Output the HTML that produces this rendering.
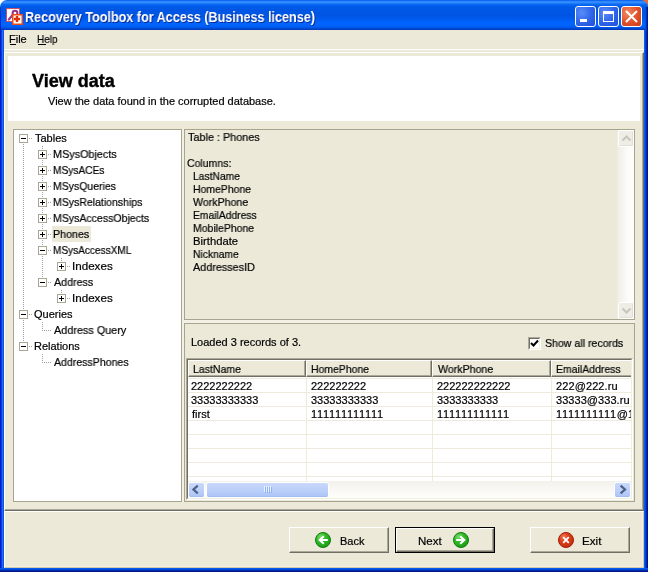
<!DOCTYPE html>
<html><head><meta charset="utf-8">
<style>
*{box-sizing:border-box}
html,body{margin:0;padding:0}
body{width:648px;height:572px;overflow:hidden;position:relative;background:#fff;font-family:"Liberation Sans",sans-serif;font-size:11px;color:#000}
.a{position:absolute}
.t{will-change:transform;-webkit-text-stroke:0.2px #000;position:absolute;white-space:pre;line-height:13px;font-size:11px;padding-top:1px}
.btn{border-top:1px solid #fff;border-left:1px solid #fff;border-right:1px solid #716F64;border-bottom:1px solid #716F64;box-shadow:inset -1px -1px 0 #ACA899;background:#ECE9D8}
.tb{width:9px;height:9px;border:1px solid #A8A593;background:#fff}
.hd{background:#ECE9D8;border-top:1px solid #fff;border-left:1px solid #fff;border-right:1px solid #716F64;border-bottom:1px solid #716F64;box-shadow:inset -1px -1px 0 #ACA899}
.sbb{width:17px;height:17px;border:1px solid #fff;border-radius:2px;background:linear-gradient(to bottom,#C8D6FB,#B6CCF8 60%,#A9C2F6);box-shadow:inset -1px -1px 0 #9EB8EA}
.sbd{width:17px;height:17px;border:1px solid #fff;border-radius:2px;background:#EEEDE6;box-shadow:inset -1px -1px 0 #E2E0D4}
</style></head><body>
<!-- corner backgrounds -->
<div class="a" style="left:0;top:0;width:10px;height:10px;background:#fff"></div>
<div class="a" style="left:638px;top:0;width:10px;height:10px;background:#f06a30"></div>

<!-- title bar -->
<div class="a" id="title" style="left:0;top:0;width:648px;height:30px;border-radius:7px 7px 0 0;
background:linear-gradient(to bottom,#0058EE 0px,#3C95FF 2px,#2A86FA 3px,#0E6EF5 4px,#005DEA 6px,#0056E4 10px,#0055E6 16px,#005DF3 20px,#0064FF 23px,#0062FC 26px,#0053E0 28px,#003FC2 29px,#003AB8 30px)"></div>
<div class="a" style="left:0;top:30px;width:4px;height:542px;background:linear-gradient(to right,#0019CF 0,#0019CF 1px,#0B3FE0 1px,#0B3FE0 2px,#1C6DF2 2px,#1C6DF2 3px,#0A54DE 3px)"></div>
<div class="a" style="left:644px;top:30px;width:4px;height:542px;background:linear-gradient(to right,#0A5CF6 0,#0A5CF6 1px,#0044D8 1px,#0044D8 2px,#002AAE 2px,#002AAE 3px,#00168A 3px)"></div>
<div class="a" style="left:0;top:7px;width:1px;height:23px;background:linear-gradient(to bottom,#0A3CD0,#0019CF)"></div>
<div class="a" style="left:645px;top:7px;width:3px;height:23px;background:linear-gradient(to right,#0050E0 0,#0050E0 1px,#0033B8 1px,#0033B8 2px,#00189A 2px)"></div>
<div class="a" style="left:0;top:568px;width:648px;height:4px;background:linear-gradient(to bottom,#0A5CF0 0,#0A5CF0 1px,#0046D4 1px,#0046D4 2px,#002CA8 2px,#002CA8 3px,#001488 3px)"></div>

<!-- title icon -->
<svg class="a" style="left:6px;top:8px" width="17" height="17" viewBox="0 0 17 17">
  <rect x="0.5" y="0.5" width="13" height="13" fill="#fff" stroke="#C8506A" stroke-width="1"/>
  <path d="M2.8 11.5 L6.8 6.8" stroke="#9C3C84" stroke-width="2.2" stroke-linecap="round"/>
  <circle cx="9" cy="5.2" r="2.4" fill="none" stroke="#9A2C80" stroke-width="2"/>
  <rect x="6.75" y="6.75" width="9.5" height="9.5" fill="#fff" stroke="#F04A10" stroke-width="1.5"/>
  <path d="M11 8 V14 M8 11 H14" stroke="#E0300A" stroke-width="2.4"/>
</svg>
<div class="a" style="left:25px;top:7px;font-weight:bold;font-size:14px;line-height:20px;white-space:pre;color:#fff;text-shadow:1px 1px 0 #0A2A90;transform:scaleX(0.9);transform-origin:0 0;will-change:transform">Recovery Toolbox for Access (Business license)</div>

<!-- caption buttons -->
<div class="a" style="left:575px;top:6px;width:21px;height:21px;border:1px solid #fff;border-radius:3px;background:radial-gradient(circle at 30% 30%,#5A8CF8 0,#2E64E8 55%,#1E50D8 100%)"></div>
<div class="a" style="left:580px;top:19px;width:7px;height:3px;background:#fff"></div>
<div class="a" style="left:598px;top:6px;width:21px;height:21px;border:1px solid #fff;border-radius:3px;background:radial-gradient(circle at 30% 30%,#5A8CF8 0,#2E64E8 55%,#1E50D8 100%)"></div>
<div class="a" style="left:603px;top:11px;width:11px;height:11px;border:1px solid #fff;border-top-width:3px"></div>
<div class="a" style="left:621px;top:6px;width:21px;height:21px;border:1px solid #fff;border-radius:3px;background:radial-gradient(circle at 30% 30%,#F08860 0,#E0502A 55%,#C83A16 100%)"></div>
<svg class="a" style="left:621px;top:6px" width="21" height="21"><path d="M5 5 L16 16 M16 5 L5 16" stroke="#fff" stroke-width="2"/></svg>

<!-- client -->
<div class="a" id="client" style="left:4px;top:30px;width:640px;height:538px;background:#ECE9D8"></div>

<!-- menu -->
<div class="t" style="left:9px;top:32px">File</div>
<div class="a" style="left:10px;top:44px;width:6px;height:1px;background:#000"></div>
<div class="t" style="left:37px;top:32px;transform:scaleX(0.91);transform-origin:0 0">Help</div>
<div class="a" style="left:38px;top:44px;width:8px;height:1px;background:#000"></div>
<div class="a" style="left:4px;top:49px;width:640px;height:1px;background:#fff"></div>

<!-- top raised frame -->
<div class="a" style="left:4px;top:52px;width:640px;height:459px;border-top:1px solid #fff;border-left:1px solid #fff;border-right:1px solid #716F64;border-bottom:1px solid #716F64"></div>
<div class="a" style="left:5px;top:53px;width:638px;height:457px;border-right:1px solid #ACA899;border-bottom:1px solid #ACA899"></div>
<!-- bottom raised frame -->
<div class="a" style="left:4px;top:511px;width:640px;height:57px;border-top:1px solid #fff;border-left:1px solid #fff;border-right:1px solid #D2C9A8;border-bottom:1px solid #D2C9A8"></div>
<div class="a" style="left:5px;top:512px;width:638px;height:55px;border-right:1px solid #F2F0E6;border-bottom:1px solid #F2F0E6"></div>

<!-- header -->
<div class="a" style="left:8px;top:56px;width:632px;height:65px;background:#fff"></div>
<div class="a" style="left:32px;top:70px;font-weight:bold;font-size:18px;line-height:20px;white-space:pre;padding-top:1px;will-change:transform;-webkit-text-stroke:0.4px #000">View data</div>
<div class="t" style="left:48px;top:94px">View the data found in the corrupted database.</div>

<!-- splitter light -->
<div class="a" style="left:182px;top:129px;width:2px;height:373px;background:#F3F1E6"></div>
<div class="a" style="left:184px;top:320px;width:451px;height:3px;background:#F3F1E6"></div>

<!-- tree -->
<div class="a" id="tree" style="left:13px;top:129px;width:169px;height:373px;border:1px solid #A7A490;background:#fff"></div>

<!--TREE-->
<div class="a" style="left:23px;top:138px;width:1px;height:209px;background:repeating-linear-gradient(to bottom,#A0A0A0 0 1px,transparent 1px 2px)"></div>
<div class="a" style="left:29px;top:138px;width:3px;height:1px;background:repeating-linear-gradient(to right,#A0A0A0 0 1px,transparent 1px 2px)"></div>
<div class="a" style="left:42px;top:154px;width:1px;height:129px;background:repeating-linear-gradient(to bottom,#A0A0A0 0 1px,transparent 1px 2px)"></div>
<div class="a" style="left:42px;top:146px;width:1px;height:9px;background:repeating-linear-gradient(to bottom,#A0A0A0 0 1px,transparent 1px 2px)"></div>
<div class="a" style="left:48px;top:154px;width:3px;height:1px;background:repeating-linear-gradient(to right,#A0A0A0 0 1px,transparent 1px 2px)"></div>
<div class="a" style="left:42px;top:170px;width:1px;height:113px;background:repeating-linear-gradient(to bottom,#A0A0A0 0 1px,transparent 1px 2px)"></div>
<div class="a" style="left:48px;top:170px;width:3px;height:1px;background:repeating-linear-gradient(to right,#A0A0A0 0 1px,transparent 1px 2px)"></div>
<div class="a" style="left:42px;top:186px;width:1px;height:97px;background:repeating-linear-gradient(to bottom,#A0A0A0 0 1px,transparent 1px 2px)"></div>
<div class="a" style="left:48px;top:186px;width:3px;height:1px;background:repeating-linear-gradient(to right,#A0A0A0 0 1px,transparent 1px 2px)"></div>
<div class="a" style="left:42px;top:202px;width:1px;height:81px;background:repeating-linear-gradient(to bottom,#A0A0A0 0 1px,transparent 1px 2px)"></div>
<div class="a" style="left:48px;top:202px;width:3px;height:1px;background:repeating-linear-gradient(to right,#A0A0A0 0 1px,transparent 1px 2px)"></div>
<div class="a" style="left:42px;top:218px;width:1px;height:65px;background:repeating-linear-gradient(to bottom,#A0A0A0 0 1px,transparent 1px 2px)"></div>
<div class="a" style="left:48px;top:218px;width:3px;height:1px;background:repeating-linear-gradient(to right,#A0A0A0 0 1px,transparent 1px 2px)"></div>
<div class="a" style="left:42px;top:234px;width:1px;height:49px;background:repeating-linear-gradient(to bottom,#A0A0A0 0 1px,transparent 1px 2px)"></div>
<div class="a" style="left:48px;top:234px;width:3px;height:1px;background:repeating-linear-gradient(to right,#A0A0A0 0 1px,transparent 1px 2px)"></div>
<div class="a" style="left:42px;top:250px;width:1px;height:33px;background:repeating-linear-gradient(to bottom,#A0A0A0 0 1px,transparent 1px 2px)"></div>
<div class="a" style="left:48px;top:250px;width:3px;height:1px;background:repeating-linear-gradient(to right,#A0A0A0 0 1px,transparent 1px 2px)"></div>
<div class="a" style="left:61px;top:258px;width:1px;height:9px;background:repeating-linear-gradient(to bottom,#A0A0A0 0 1px,transparent 1px 2px)"></div>
<div class="a" style="left:67px;top:266px;width:3px;height:1px;background:repeating-linear-gradient(to right,#A0A0A0 0 1px,transparent 1px 2px)"></div>
<div class="a" style="left:48px;top:282px;width:3px;height:1px;background:repeating-linear-gradient(to right,#A0A0A0 0 1px,transparent 1px 2px)"></div>
<div class="a" style="left:61px;top:290px;width:1px;height:9px;background:repeating-linear-gradient(to bottom,#A0A0A0 0 1px,transparent 1px 2px)"></div>
<div class="a" style="left:67px;top:298px;width:3px;height:1px;background:repeating-linear-gradient(to right,#A0A0A0 0 1px,transparent 1px 2px)"></div>
<div class="a" style="left:23px;top:314px;width:1px;height:33px;background:repeating-linear-gradient(to bottom,#A0A0A0 0 1px,transparent 1px 2px)"></div>
<div class="a" style="left:29px;top:314px;width:3px;height:1px;background:repeating-linear-gradient(to right,#A0A0A0 0 1px,transparent 1px 2px)"></div>
<div class="a" style="left:42px;top:322px;width:1px;height:9px;background:repeating-linear-gradient(to bottom,#A0A0A0 0 1px,transparent 1px 2px)"></div>
<div class="a" style="left:44px;top:330px;width:7px;height:1px;background:repeating-linear-gradient(to right,#A0A0A0 0 1px,transparent 1px 2px)"></div>
<div class="a" style="left:29px;top:346px;width:3px;height:1px;background:repeating-linear-gradient(to right,#A0A0A0 0 1px,transparent 1px 2px)"></div>
<div class="a" style="left:42px;top:354px;width:1px;height:9px;background:repeating-linear-gradient(to bottom,#A0A0A0 0 1px,transparent 1px 2px)"></div>
<div class="a" style="left:44px;top:362px;width:7px;height:1px;background:repeating-linear-gradient(to right,#A0A0A0 0 1px,transparent 1px 2px)"></div>
<div class="a tb" style="left:19px;top:134px"></div>
<div class="a" style="left:21px;top:138px;width:5px;height:1px;background:#000"></div>
<div class="t tt" style="left:35px;top:131px">Tables</div>
<div class="a tb" style="left:38px;top:150px"></div>
<div class="a" style="left:40px;top:154px;width:5px;height:1px;background:#000"></div>
<div class="a" style="left:42px;top:152px;width:1px;height:5px;background:#000"></div>
<div class="t tt" style="left:53px;top:147px;transform:scaleX(0.984);transform-origin:0 0">MSysObjects</div>
<div class="a tb" style="left:38px;top:166px"></div>
<div class="a" style="left:40px;top:170px;width:5px;height:1px;background:#000"></div>
<div class="a" style="left:42px;top:168px;width:1px;height:5px;background:#000"></div>
<div class="t tt" style="left:53px;top:163px;transform:scaleX(0.925);transform-origin:0 0">MSysACEs</div>
<div class="a tb" style="left:38px;top:182px"></div>
<div class="a" style="left:40px;top:186px;width:5px;height:1px;background:#000"></div>
<div class="a" style="left:42px;top:184px;width:1px;height:5px;background:#000"></div>
<div class="t tt" style="left:53px;top:179px;transform:scaleX(0.953);transform-origin:0 0">MSysQueries</div>
<div class="a tb" style="left:38px;top:198px"></div>
<div class="a" style="left:40px;top:202px;width:5px;height:1px;background:#000"></div>
<div class="a" style="left:42px;top:200px;width:1px;height:5px;background:#000"></div>
<div class="t tt" style="left:53px;top:195px;transform:scaleX(0.956);transform-origin:0 0">MSysRelationships</div>
<div class="a tb" style="left:38px;top:214px"></div>
<div class="a" style="left:40px;top:218px;width:5px;height:1px;background:#000"></div>
<div class="a" style="left:42px;top:216px;width:1px;height:5px;background:#000"></div>
<div class="t tt" style="left:53px;top:211px;transform:scaleX(0.959);transform-origin:0 0">MSysAccessObjects</div>
<div class="a tb" style="left:38px;top:230px"></div>
<div class="a" style="left:40px;top:234px;width:5px;height:1px;background:#000"></div>
<div class="a" style="left:42px;top:232px;width:1px;height:5px;background:#000"></div>
<div class="a" style="left:52px;top:226px;width:39px;height:16px;background:#ECE9D8"></div>
<div class="t tt" style="left:53px;top:227px;transform:scaleX(0.971);transform-origin:0 0">Phones</div>
<div class="a tb" style="left:38px;top:246px"></div>
<div class="a" style="left:40px;top:250px;width:5px;height:1px;background:#000"></div>
<div class="t tt" style="left:53px;top:243px;transform:scaleX(0.916);transform-origin:0 0">MSysAccessXML</div>
<div class="a tb" style="left:57px;top:262px"></div>
<div class="a" style="left:59px;top:266px;width:5px;height:1px;background:#000"></div>
<div class="a" style="left:61px;top:264px;width:1px;height:5px;background:#000"></div>
<div class="t tt" style="left:72px;top:259px;transform:scaleX(1.056);transform-origin:0 0">Indexes</div>
<div class="a tb" style="left:38px;top:278px"></div>
<div class="a" style="left:40px;top:282px;width:5px;height:1px;background:#000"></div>
<div class="t tt" style="left:54px;top:275px;transform:scaleX(0.974);transform-origin:0 0">Address</div>
<div class="a tb" style="left:57px;top:294px"></div>
<div class="a" style="left:59px;top:298px;width:5px;height:1px;background:#000"></div>
<div class="a" style="left:61px;top:296px;width:1px;height:5px;background:#000"></div>
<div class="t tt" style="left:72px;top:291px;transform:scaleX(1.056);transform-origin:0 0">Indexes</div>
<div class="a tb" style="left:19px;top:310px"></div>
<div class="a" style="left:21px;top:314px;width:5px;height:1px;background:#000"></div>
<div class="t tt" style="left:34px;top:307px">Queries</div>
<div class="t tt" style="left:54px;top:323px;transform:scaleX(0.986);transform-origin:0 0">Address Query</div>
<div class="a tb" style="left:19px;top:342px"></div>
<div class="a" style="left:21px;top:346px;width:5px;height:1px;background:#000"></div>
<div class="t tt" style="left:34px;top:339px">Relations</div>
<div class="t tt" style="left:54px;top:355px;transform:scaleX(0.961);transform-origin:0 0">AddressPhones</div>
<!--/TREE-->
<!-- right top panel -->
<div class="a" style="left:184px;top:129px;width:451px;height:191px;border:1px solid #A7A490;background:#ECE9D8"></div>
<div class="t" style="left:188px;top:130px;transform:scaleX(0.986);transform-origin:0 0">Table : Phones</div>
<div class="t" style="left:187px;top:156px;transform:scaleX(0.955);transform-origin:0 0">Columns:</div>
<div class="t" style="left:193px;top:169px;transform:scaleX(0.938);transform-origin:0 0">LastName</div>
<div class="t" style="left:193px;top:182px;transform:scaleX(0.949);transform-origin:0 0">HomePhone</div>
<div class="t" style="left:193px;top:195px;transform:scaleX(0.964);transform-origin:0 0">WorkPhone</div>
<div class="t" style="left:193px;top:208px;transform:scaleX(0.939);transform-origin:0 0">EmailAddress</div>
<div class="t" style="left:193px;top:221px;transform:scaleX(0.952);transform-origin:0 0">MobilePhone</div>
<div class="t" style="left:193px;top:234px;transform:scaleX(1.024);transform-origin:0 0">Birthdate</div>
<div class="t" style="left:193px;top:247px;transform:scaleX(0.936);transform-origin:0 0">Nickname</div>
<div class="t" style="left:193px;top:260px;transform:scaleX(0.984);transform-origin:0 0">AddressesID</div>

<!-- right bottom panel -->
<div class="a" style="left:184px;top:323px;width:451px;height:179px;border:1px solid #A7A490;background:#ECE9D8"></div>
<div class="t" style="left:191px;top:335px">Loaded 3 records of 3.</div>
<div class="t" style="left:545px;top:336px;transform:scaleX(0.962);transform-origin:0 0">Show all records</div>

<!--GRID-->
<div class="a" style="left:186px;top:358px;width:447px;height:142px;border-top:1px solid #ACA899;border-left:1px solid #ACA899;border-right:1px solid #fff;border-bottom:1px solid #fff"></div>
<div class="a" style="left:187px;top:359px;width:445px;height:140px;border-top:1px solid #716F64;border-left:1px solid #716F64;border-right:1px solid #F1EFE2;border-bottom:1px solid #F1EFE2;background:#fff;overflow:hidden">
<div class="a hd" style="left:0px;top:0;width:118px;height:17px"></div>
<div class="t" style="left:5px;top:2px;transform:scaleX(0.958);transform-origin:0 0">LastName</div>
<div class="a hd" style="left:118px;top:0;width:126px;height:17px"></div>
<div class="t" style="left:123px;top:2px;transform:scaleX(0.949);transform-origin:0 0">HomePhone</div>
<div class="a hd" style="left:244px;top:0;width:119px;height:17px"></div>
<div class="t" style="left:250px;top:2px;transform:scaleX(0.964);transform-origin:0 0">WorkPhone</div>
<div class="a hd" style="left:363px;top:0;width:120px;height:17px"></div>
<div class="t" style="left:368px;top:2px;transform:scaleX(0.954);transform-origin:0 0">EmailAddress</div>
<div class="a" style="left:118px;top:17px;width:1px;height:110px;background:#EEEBDD"></div>
<div class="a" style="left:244px;top:17px;width:1px;height:110px;background:#EEEBDD"></div>
<div class="a" style="left:363px;top:17px;width:1px;height:110px;background:#EEEBDD"></div>
<div class="a" style="left:0;top:18px;width:443px;height:1px;background:#EEEBDD"></div>
<div class="a" style="left:0;top:32px;width:443px;height:1px;background:#EEEBDD"></div>
<div class="a" style="left:0;top:46px;width:443px;height:1px;background:#EEEBDD"></div>
<div class="a" style="left:0;top:60px;width:443px;height:1px;background:#EEEBDD"></div>
<div class="a" style="left:0;top:74px;width:443px;height:1px;background:#EEEBDD"></div>
<div class="a" style="left:0;top:88px;width:443px;height:1px;background:#EEEBDD"></div>
<div class="a" style="left:0;top:102px;width:443px;height:1px;background:#EEEBDD"></div>
<div class="a" style="left:0;top:116px;width:443px;height:1px;background:#EEEBDD"></div>
<div class="t" style="left:3px;top:19px">2222222222</div>
<div class="t" style="left:123px;top:19px">222222222</div>
<div class="t" style="left:249px;top:19px">222222222222</div>
<div class="t" style="left:368px;top:19px;letter-spacing:0.1px">222@222.ru</div>
<div class="t" style="left:3px;top:33px">33333333333</div>
<div class="t" style="left:123px;top:33px">33333333333</div>
<div class="t" style="left:249px;top:33px">3333333333</div>
<div class="t" style="left:368px;top:33px;letter-spacing:0.05px">33333@333.ru</div>
<div class="t" style="left:4px;top:47px">first</div>
<div class="t" style="left:123px;top:47px;letter-spacing:0.7px">111111111111</div>
<div class="t" style="left:249px;top:47px;letter-spacing:0.7px">111111111111</div>
<div class="t" style="left:368px;top:47px"><span style="letter-spacing:0.7px">1111111111</span>@111.ru</div>
<div class="a" style="left:0;top:121px;width:443px;height:17px;background:linear-gradient(to bottom,#F3F1EC,#FEFEFB)"></div>
<svg width="0" height="0" style="position:absolute"><defs><linearGradient id="sbg" x1="0" y1="0" x2="0" y2="1"><stop offset="0" stop-color="#CAD8FC"/><stop offset="0.6" stop-color="#B9CEF9"/><stop offset="1" stop-color="#AAC3F6"/></linearGradient></defs></svg>
<svg class="a" style="left:0px;top:122px" width="17" height="16" viewBox="0 0 17 16"><rect x="0.5" y="0.5" width="16" height="15" rx="2" fill="url(#sbg)" stroke="#fff"/><path d="M2 14.5 H15" stroke="#A3BDEE"/><path d="M9.8 3.6 L5.4 7.5 L9.8 11.4" fill="none" stroke="#4D6185" stroke-width="2.2"/></svg>
<svg class="a" style="left:426px;top:122px" width="17" height="16" viewBox="0 0 17 16"><rect x="0.5" y="0.5" width="16" height="15" rx="2" fill="url(#sbg)" stroke="#fff"/><path d="M2 14.5 H15" stroke="#A3BDEE"/><path d="M6.6 3.6 L11 7.5 L6.6 11.4" fill="none" stroke="#4D6185" stroke-width="2.2"/></svg>
<svg class="a" style="left:18px;top:122px" width="123" height="16" viewBox="0 0 123 16"><rect x="0.5" y="0.5" width="122" height="15" rx="2" fill="url(#sbg)" stroke="#fff"/><path d="M2 14.5 H121" stroke="#A3BDEE"/><path d="M58.5 4 V10" stroke="#EEF4FE"/><path d="M59.5 5 V11" stroke="#8CB0F8"/><path d="M60.5 4 V10" stroke="#EEF4FE"/><path d="M61.5 5 V11" stroke="#8CB0F8"/><path d="M62.5 4 V10" stroke="#EEF4FE"/><path d="M63.5 5 V11" stroke="#8CB0F8"/><path d="M64.5 4 V10" stroke="#EEF4FE"/><path d="M65.5 5 V11" stroke="#8CB0F8"/></svg>
</div>
<!--/GRID-->
<!-- separator buttons -->
<div class="a btn" style="left:289px;top:527px;width:100px;height:26px"></div>
<div class="a" style="left:395px;top:527px;width:100px;height:26px;border:1px solid #000"></div><div class="a btn" style="left:396px;top:528px;width:98px;height:24px"></div>
<div class="a btn" style="left:530px;top:527px;width:100px;height:26px"></div>
<div class="t" style="left:340px;top:534px">Back</div>
<div class="t" style="left:418px;top:534px;transform:scaleX(1.05);transform-origin:0 0">Next</div>
<div class="t" style="left:582px;top:534px;transform:scaleX(1.06);transform-origin:0 0">Exit</div>

<!-- v scrollbar top panel (disabled) -->
<div class="a" style="left:617px;top:130px;width:17px;height:189px;background:linear-gradient(to right,#EEEDE5,#FBFBF8 60%,#FEFEFD)"></div>
<div class="a sbd" style="left:618px;top:130px;width:16px"><svg width="15" height="15" style="position:absolute;left:0;top:0"><path d="M3.5 9.5 L7.5 5.5 L11.5 9.5" fill="none" stroke="#C9C7BA" stroke-width="2.2"/></svg></div>
<div class="a sbd" style="left:618px;top:302px;width:16px"><svg width="15" height="15" style="position:absolute;left:0;top:0"><path d="M3.5 5.5 L7.5 9.5 L11.5 5.5" fill="none" stroke="#C9C7BA" stroke-width="2.2"/></svg></div>

<!-- checkbox -->
<div class="a" style="left:528px;top:337px;width:13px;height:13px;border-top:1px solid #ACA899;border-left:1px solid #ACA899;border-right:1px solid #fff;border-bottom:1px solid #fff"></div>
<div class="a" style="left:529px;top:338px;width:11px;height:11px;border-top:1px solid #716F64;border-left:1px solid #716F64;border-right:1px solid #F1EFE2;border-bottom:1px solid #F1EFE2;background:#fff"></div>
<svg class="a" style="left:530px;top:339px" width="9" height="9"><path d="M1 4 L3.5 6.5 L8 1.5" fill="none" stroke="#000" stroke-width="2"/></svg>

<!-- button icons -->
<svg class="a" style="left:315px;top:532px" width="16" height="16" viewBox="0 0 16 16">
 <defs><radialGradient id="gg" cx="0.35" cy="0.3" r="0.75"><stop offset="0" stop-color="#7EDB6E"/><stop offset="0.45" stop-color="#32B82A"/><stop offset="1" stop-color="#1C9A14"/></radialGradient></defs>
 <circle cx="8" cy="8" r="7.5" fill="url(#gg)" stroke="#0C7E0C" stroke-width="1"/>
 <path d="M8.8 4.2 L4.6 8 L8.8 11.8 M4.6 8 H12.8" fill="none" stroke="#fff" stroke-width="2"/>
</svg>
<svg class="a" style="left:453px;top:532px" width="16" height="16" viewBox="0 0 16 16">
 <circle cx="8" cy="8" r="7.5" fill="url(#gg)" stroke="#0C7E0C" stroke-width="1"/>
 <path d="M7.2 4.2 L11.4 8 L7.2 11.8 M11.4 8 H3.2" fill="none" stroke="#fff" stroke-width="2"/>
</svg>
<svg class="a" style="left:558px;top:532px" width="16" height="16" viewBox="0 0 16 16">
 <defs><radialGradient id="rg" cx="0.35" cy="0.3" r="0.75"><stop offset="0" stop-color="#F07A5A"/><stop offset="0.45" stop-color="#DC3C18"/><stop offset="1" stop-color="#C03010"/></radialGradient></defs>
 <circle cx="8" cy="8" r="7.5" fill="url(#rg)" stroke="#A81A04" stroke-width="1"/>
 <path d="M5.2 5.2 L10.8 10.8 M10.8 5.2 L5.2 10.8" stroke="#fff" stroke-width="1.8"/>
</svg>
</body></html>
